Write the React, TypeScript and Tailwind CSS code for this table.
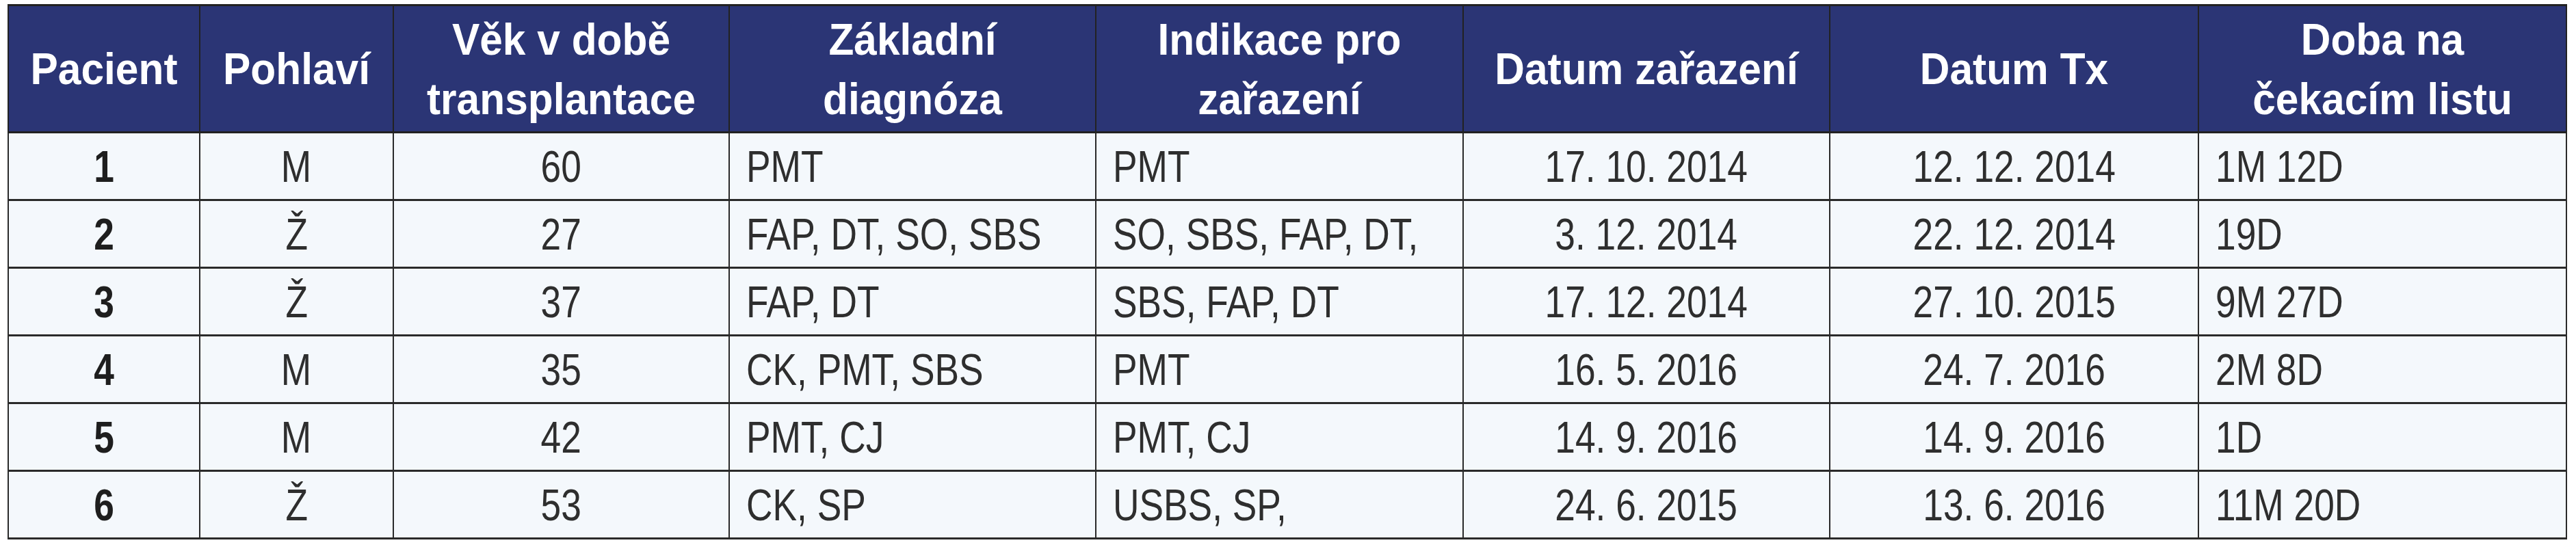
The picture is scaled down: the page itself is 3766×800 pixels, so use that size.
const headers = [
  ['Pacient'],
  ['Pohlaví'],
  ['Věk v době', 'transplantace'],
  ['Základní', 'diagnóza'],
  ['Indikace pro', 'zařazení'],
  ['Datum zařazení'],
  ['Datum Tx'],
  ['Doba na', 'čekacím listu'],
];

const rows = [
  ['1', 'M', '60', 'PMT', 'PMT', '17. 10. 2014', '12. 12. 2014', '1M 12D'],
  ['2', 'Ž', '27', 'FAP, DT, SO, SBS', 'SO, SBS, FAP, DT,', '3. 12. 2014', '22. 12. 2014', '19D'],
  ['3', 'Ž', '37', 'FAP, DT', 'SBS, FAP, DT', '17. 12. 2014', '27. 10. 2015', '9M 27D'],
  ['4', 'M', '35', 'CK, PMT, SBS', 'PMT', '16. 5. 2016', '24. 7. 2016', '2M 8D'],
  ['5', 'M', '42', 'PMT, CJ', 'PMT, CJ', '14. 9. 2016', '14. 9. 2016', '1D'],
  ['6', 'Ž', '53', 'CK, SP', 'USBS, SP,', '24. 6. 2015', '13. 6. 2016', '11M 20D'],
];

// left aligned columns: diagnosis, indication, waiting time
const alignLeft = [false, false, false, true, true, false, false, true];

const App = () => {
  return (
    <div className="min-h-screen bg-white pt-[6px] pl-[11px] font-['Liberation_Sans',Arial,sans-serif]">
      <table className="table-fixed border-collapse w-[3740px]">
        <colgroup>
          <col className="w-[280px]" />
          <col className="w-[283px]" />
          <col className="w-[491px]" />
          <col className="w-[536px]" />
          <col className="w-[537px]" />
          <col className="w-[536px]" />
          <col className="w-[539px]" />
          <col className="w-[538px]" />
        </colgroup>
        <thead>
          <tr className="h-[186px]">
            {headers.map((lines, i) => (
              <th
                key={i}
                className="bg-[#2b3575] text-white text-center align-middle font-bold text-[65px] leading-[87px] border-x-2 border-y-[3px] border-[#222222] px-1"
              >
                {lines.map((l, j) => (
                  <div key={j} className="scale-x-[0.93] origin-center whitespace-nowrap">
                    {l}
                  </div>
                ))}
              </th>
            ))}
          </tr>
        </thead>
        <tbody>
          {rows.map((row, r) => (
            <tr key={r} className="h-[99px]">
              {row.map((cell, c) => (
                <td
                  key={c}
                  className={
                    'bg-[#f4f8fc] text-[65px] leading-none align-middle border-x-2 border-y-[3px] border-[#2a2a2a] whitespace-nowrap ' +
                    (alignLeft[c] ? 'text-left pl-[24px]' : 'text-center') +
                    (c === 0 ? ' font-bold text-[#1e1e1e]' : ' font-normal text-[#2e2e2e]')
                  }
                >
                  <span
                    className={
                      'inline-block scale-x-[0.82] ' + (alignLeft[c] ? 'origin-left' : 'origin-center')
                    }
                  >
                    {cell}
                  </span>
                </td>
              ))}
            </tr>
          ))}
        </tbody>
      </table>
    </div>
  );
};

export default App;
